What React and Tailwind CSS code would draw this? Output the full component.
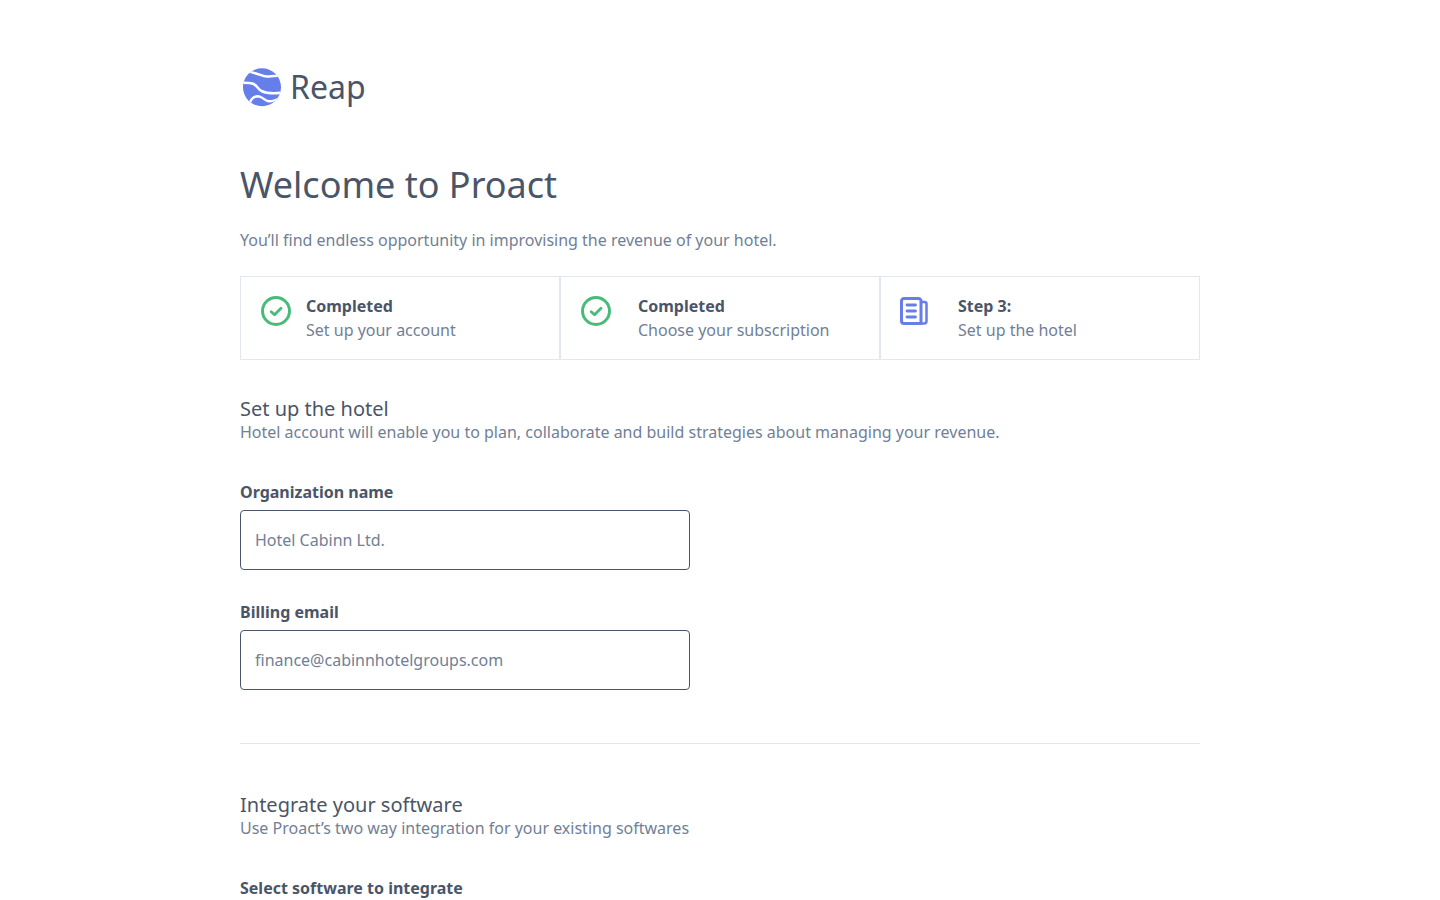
import React from "react";

function Check() {
  return (
    <svg width="30" height="30" viewBox="0 0 30 30" fill="none" className="shrink-0 -mt-px">
      <circle cx="15" cy="15" r="13.5" stroke="#48bb78" strokeWidth="3" />
      <path d="M10.200 15.800l3.300 3 6.500-6.500" stroke="#48bb78" strokeWidth="2.800" strokeLinecap="round" strokeLinejoin="round" />
    </svg>
  );
}

function Paper() {
  return (
    <svg width="28" height="28" viewBox="0 0 28 28" fill="none" className="shrink-0 -ml-px">
      <path d="M4 1.500h14.500A2.500 2.500 0 0 1 21 4v22.500H4A2.500 2.500 0 0 1 1.500 24V4A2.500 2.500 0 0 1 4 1.500z" stroke="#667eea" strokeWidth="3" strokeLinejoin="round" />
      <path d="M21 5h3.500a2 2 0 0 1 2 2v17a2.500 2.500 0 0 1-2.500 2.500h-3" stroke="#667eea" strokeWidth="2.500" strokeLinejoin="round" />
      <path d="M7 8h8.500M7 14h8.500M7 20h8.500" stroke="#667eea" strokeWidth="2.800" strokeLinecap="round" />
    </svg>
  );
}

function Logo() {
  return (
    <svg width="42" height="40" viewBox="0 0 42 40" className="shrink-0">
      <defs>
        <clipPath id="globe"><circle cx="22" cy="20.200" r="19" /></clipPath>
      </defs>
      <g clipPath="url(#globe)">
        <rect width="42" height="40" fill="#667eea" />
        <path d="M6 3.500C11 5 12 5.300 16 6.500s7 3 11 3 8-.5 13-1" stroke="#fff" strokeWidth="2.400" fill="none" />
        <path d="M0 15.800c4 0 9-.2 13 1 4.500 1.500 5 6 9 7.500 4 1.800 11 2.500 20 1.500" stroke="#fff" strokeWidth="2.600" fill="none" />
        <path d="M10 35.500c1-3 3-6 8-6.200 4.500 0 6 4.500 11 5 4 .3 8-1.500 13-4" stroke="#fff" strokeWidth="2.400" fill="none" />
      </g>
    </svg>
  );
}

function Step({ icon, title, text, textClass }) {
  return (
    <div className="flex h-[84px] w-[320px] items-start pl-5 pt-5 border border-[#e2e8f0]">
      {icon}
      <div className={`${textClass} -mt-[3px]`}>
        <div className="text-[16px] leading-[24px] font-bold text-[#4a5568]">{title}</div>
        <div className="text-[16px] leading-[24px] text-[#718096]">{text}</div>
      </div>
    </div>
  );
}

function Field({ label, value }) {
  return (
    <div className="w-[450px]">
      <div className="text-[16px] leading-[24px] font-bold text-[#4a5568]">{label}</div>
      <div className="mt-[6px] flex h-[60px] items-center rounded-[4px] border border-[#4a5568] bg-white px-[14px] text-[16px] text-[#718096]">
        {value}
      </div>
    </div>
  );
}

export default function App() {
  return (
    <div className="h-screen overflow-hidden bg-white antialiased font-['Noto_Sans',sans-serif]">
      <div className="mx-auto w-[960px] pt-[67px]">
        <div className="flex h-[40px] items-center gap-[8px]">
          <Logo />
          <span className="text-[32px] leading-[40px] text-[#4a5568]">Reap</span>
        </div>
        <h1 className="mt-[52px] text-[36px] leading-[52px] text-[#4a5568]">Welcome to Proact</h1>
        <p className="mt-[17px] text-[16px] leading-[24px] text-[#718096]">
          You’ll find endless opportunity in improvising the revenue of your hotel.
        </p>
        <div className="mt-[24px] flex">
          <Step icon={<Check />} title="Completed" text="Set up your account" textClass="ml-[15px]" />
          <Step icon={<Check />} title="Completed" text="Choose your subscription" textClass="ml-[27px]" />
          <Step icon={<Paper />} title="Step 3:" text="Set up the hotel" textClass="ml-[30px]" />
        </div>
        <h2 className="mt-[36px] text-[20px] leading-[26px] text-[#4a5568]">Set up the hotel</h2>
        <p className="text-[16px] leading-[20px] text-[#718096]">
          Hotel account will enable you to plan, collaborate and build strategies about managing your revenue.
        </p>
        <div className="mt-[38px] flex flex-col gap-[30px]">
          <Field label="Organization name" value="Hotel Cabinn Ltd." />
          <Field label="Billing email" value="finance@cabinnhotelgroups.com" />
        </div>
        <div className="mt-[53px] h-px bg-[#e2e8f0]" />
        <h2 className="mt-[48px] text-[20px] leading-[26px] text-[#4a5568]">Integrate your software</h2>
        <p className="text-[16px] leading-[20px] text-[#718096]">
          Use Proact’s two way integration for your existing softwares
        </p>
        <div className="mt-[38px] text-[16px] leading-[24px] font-bold text-[#4a5568]">Select software to integrate</div>
      </div>
    </div>
  );
}
